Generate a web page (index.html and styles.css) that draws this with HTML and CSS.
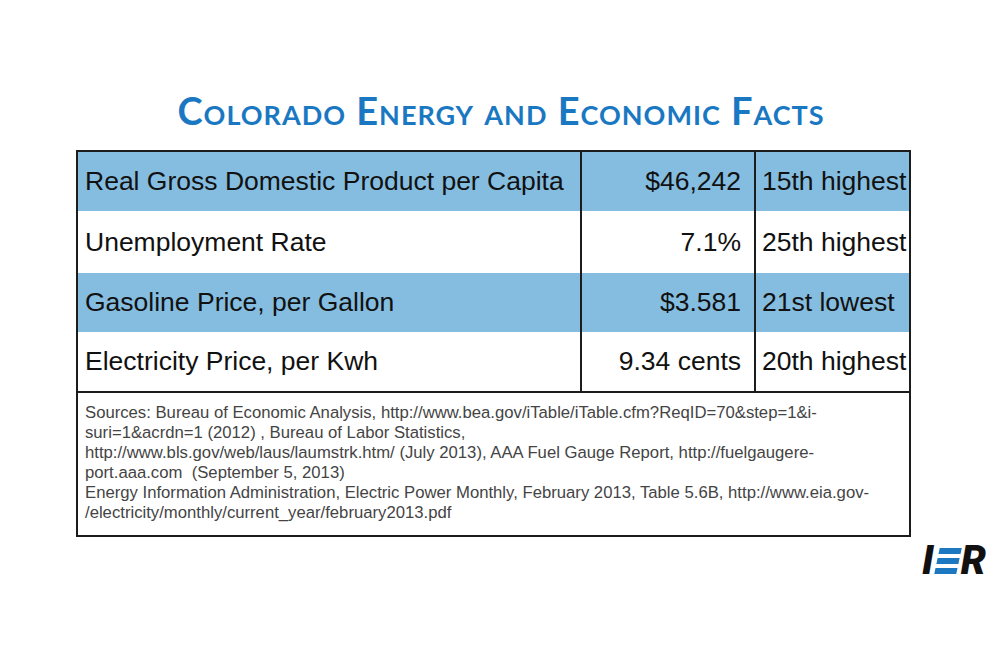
FILE: index.html
```html
<!DOCTYPE html>
<html lang="en">
<head>
<meta charset="utf-8">
<title>Colorado Energy and Economic Facts</title>
<link rel="stylesheet" href="styles.css">
</head>
<body>
<main class="page">
  <h1 class="title">Colorado Energy and Economic Facts</h1>
  <table class="facts">
    <tbody>
      <tr class="row row-blue">
        <td class="label">Real Gross Domestic Product per Capita</td>
        <td class="value">$46,242</td>
        <td class="rank">15th highest</td>
      </tr>
      <tr class="row row-white row-tall">
        <td class="label">Unemployment Rate</td>
        <td class="value">7.1%</td>
        <td class="rank">25th highest</td>
      </tr>
      <tr class="row row-blue">
        <td class="label">Gasoline Price, per Gallon</td>
        <td class="value">$3.581</td>
        <td class="rank">21st lowest</td>
      </tr>
      <tr class="row row-white">
        <td class="label">Electricity Price, per Kwh</td>
        <td class="value">9.34 cents</td>
        <td class="rank">20th highest</td>
      </tr>
      <tr>
        <td class="sources" colspan="3">Sources: Bureau of Economic Analysis, http://www.bea.gov/iTable/iTable.cfm?ReqID=70&amp;step=1&amp;i-<br>suri=1&amp;acrdn=1 (2012) , Bureau of Labor Statistics,<br>http://www.bls.gov/web/laus/laumstrk.htm/ (July 2013), AAA Fuel Gauge Report, http://fuelgaugere-<br>port.aaa.com &nbsp;(September 5, 2013)<br>Energy Information Administration, Electric Power Monthly, February 2013, Table 5.6B, http://www.eia.gov-<br>/electricity/monthly/current_year/february2013.pdf</td>
      </tr>
    </tbody>
  </table>
  <div class="logo-bar">
    <div class="logo" aria-label="IER">
      <span class="logo-letter">I</span>
      <span class="logo-e" aria-hidden="true"><i></i><i></i><i></i></span>
      <span class="logo-letter">R</span>
    </div>
  </div>
</main>
</body>
</html>
```
FILE: styles.css
```css
html, body {
  margin: 0;
  padding: 0;
  background: #ffffff;
}

body {
  font-family: "Liberation Sans", Arial, Helvetica, sans-serif;
  color: #111111;
}

.page {
  width: 1000px;
  height: 667px;
  padding-top: 91px;
  box-sizing: border-box;
}

.title {
  margin: 0 0 21px 0;
  font-family: Lato, "Open Sans", sans-serif;
  font-weight: 700;
  font-size: 38px;
  line-height: 38px;
  font-variant: small-caps;
  letter-spacing: 1px;
  color: #1a78c2;
  text-align: center;
  padding-left: 2px;
}

.facts {
  margin-left: 76px;
  width: 835px;
  border: 2px solid #1c1c1c;
  border-collapse: separate;
  border-spacing: 0;
  table-layout: fixed;
}

.row td {
  font-size: 26.5px;
  white-space: nowrap;
  vertical-align: middle;
  padding: 0;
}

.row { height: 59px; }
.row-tall { height: 62px; }

.row-blue td { background: #85bde0; }
.row-white td { background: #ffffff; }

.label {
  width: 495px;
  padding-left: 7px !important;
}

.value {
  width: 159px;
  border-left: 2px solid #1c1c1c;
  text-align: right;
  padding-right: 13px !important;
}

.rank {
  width: 147px;
  border-left: 2px solid #1c1c1c;
  padding-left: 6px !important;
  overflow: visible;
}

.sources {
  border-top: 2px solid #1c1c1c;
  padding: 10px 8px 12px 7px;
  font-size: 16.7px;
  line-height: 20px;
  color: #444444;
  white-space: nowrap;
  vertical-align: top;
}

.logo-bar {
  display: flex;
  justify-content: flex-end;
  padding-right: 14px;
  margin-top: 8px;
}

.logo {
  display: flex;
  align-items: center;
  height: 32px;
}

.logo-letter {
  font-family: Roboto, "Liberation Sans", sans-serif;
  font-weight: 900;
  font-style: italic;
  font-size: 40px;
  line-height: 32px;
  color: #111111;
}

.logo-e {
  display: flex;
  flex-direction: column;
  gap: 4px;
  margin: 0 2px 0 3px;
  transform: skewX(-12deg);
}

.logo-e i {
  display: block;
  width: 22px;
  height: 6px;
  background: #1c78c0;
}
```
